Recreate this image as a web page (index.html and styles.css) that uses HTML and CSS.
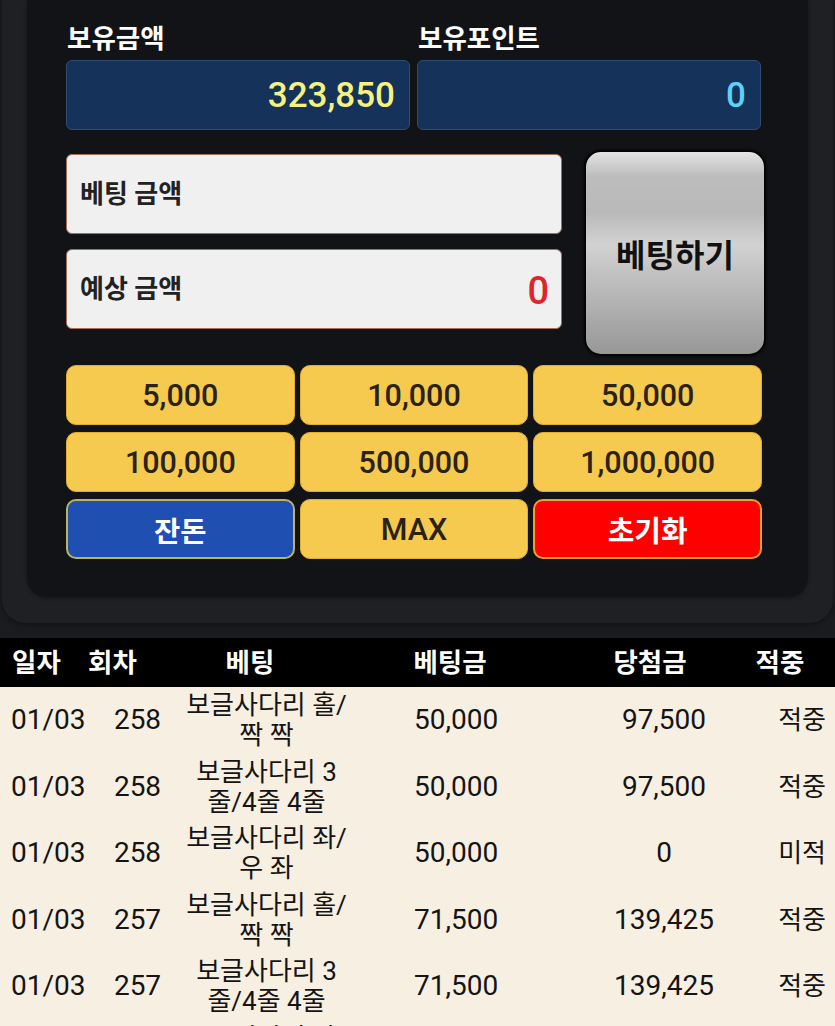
FILE: index.html
```html
<!DOCTYPE html>
<html lang="ko">
<head>
<meta charset="utf-8">
<title>베팅</title>
<link rel="stylesheet" href="styles.css">
</head>
<body>
<div class="top">
  <div class="outer">
    <div class="inner">
      <div class="balances">
        <div class="bal">
          <div class="bal-label">보유금액</div>
          <div class="bal-field"><span class="money">323,850</span></div>
        </div>
        <div class="bal">
          <div class="bal-label">보유포인트</div>
          <div class="bal-field"><span class="point">0</span></div>
        </div>
      </div>
      <div class="bet">
        <div class="bet-inputs">
          <div class="bet-input"><span class="bet-label">베팅 금액</span></div>
          <div class="bet-input"><span class="bet-label">예상 금액</span><span class="expect">0</span></div>
        </div>
        <button class="bet-btn">베팅하기</button>
      </div>
      <div class="chips">
        <button class="chip">5,000</button>
        <button class="chip">10,000</button>
        <button class="chip">50,000</button>
        <button class="chip">100,000</button>
        <button class="chip">500,000</button>
        <button class="chip">1,000,000</button>
        <button class="chip chip-blue">잔돈</button>
        <button class="chip">MAX</button>
        <button class="chip chip-red">초기화</button>
      </div>
    </div>
  </div>
</div>
<div class="table">
  <div class="thead">
    <div class="th th-date">일자</div>
    <div class="th th-round">회차</div>
    <div class="th">베팅</div>
    <div class="th">베팅금</div>
    <div class="th">당첨금</div>
    <div class="th">적중</div>
  </div>
  <div class="tr">
    <div class="td date">01/03</div><div class="td round">258</div>
    <div class="td pick">보글사다리 홀/<br>짝 짝</div>
    <div class="td amount">50,000</div><div class="td win">97,500</div><div class="td hit">적중</div>
  </div>
  <div class="tr">
    <div class="td date">01/03</div><div class="td round">258</div>
    <div class="td pick">보글사다리 3<br>줄/4줄 4줄</div>
    <div class="td amount">50,000</div><div class="td win">97,500</div><div class="td hit">적중</div>
  </div>
  <div class="tr">
    <div class="td date">01/03</div><div class="td round">258</div>
    <div class="td pick">보글사다리 좌/<br>우 좌</div>
    <div class="td amount">50,000</div><div class="td win">0</div><div class="td hit">미적</div>
  </div>
  <div class="tr">
    <div class="td date">01/03</div><div class="td round">257</div>
    <div class="td pick">보글사다리 홀/<br>짝 짝</div>
    <div class="td amount">71,500</div><div class="td win">139,425</div><div class="td hit">적중</div>
  </div>
  <div class="tr">
    <div class="td date">01/03</div><div class="td round">257</div>
    <div class="td pick">보글사다리 3<br>줄/4줄 4줄</div>
    <div class="td amount">71,500</div><div class="td win">139,425</div><div class="td hit">적중</div>
  </div>
  <div class="tr">
    <div class="td date">01/03</div><div class="td round">257</div>
    <div class="td pick">보글사다리 좌/<br>우 좌</div>
    <div class="td amount">71,500</div><div class="td win">0</div><div class="td hit">미적</div>
  </div>
</div>
</body>
</html>
```

FILE: styles.css
```css
* { box-sizing: border-box; }
html, body { margin: 0; padding: 0; }
body {
  background: #f7efe2;
  font-family: Roboto, "Noto Sans CJK KR", sans-serif;
  width: 835px;
  overflow: hidden;
}
.top {
  background: #1b1c20;
  padding: 0 2px 15px 2px;
}
.outer {
  background: #1f2024;
  border-radius: 0 0 24px 24px;
  padding: 0 25px 26px 25px;
  box-shadow: 0 2px 6px rgba(0,0,0,0.35);
}
.inner {
  background: #121316;
  border-radius: 0 0 20px 20px;
  padding: 22px 40px 38px 39px;
  box-shadow: 0 1px 4px rgba(0,0,0,0.4);
}
.balances {
  display: grid;
  grid-template-columns: 344px 344px;
  column-gap: 7px;
}
.bal-label {
  color: #ffffff;
  font-weight: 700;
  font-size: 26.5px;
  line-height: 34px;
  margin-bottom: 4px;
  padding-left: 1px;
}
.bal-field {
  height: 70px;
  background: #14325a;
  border: 1px solid #2e4d73;
  border-radius: 6px;
  display: flex;
  align-items: center;
  justify-content: flex-end;
  padding-right: 14px;
  font-size: 35px;
  font-weight: 500;
}
.money { color: #f7f27c; }
.point { color: #5cd3f5; }

.bet {
  margin-top: 20px;
  display: grid;
  grid-template-columns: 496px 182px;
  column-gap: 22px;
  align-items: start;
}
.bet-inputs {
  margin-top: 4px;
  display: flex;
  flex-direction: column;
  gap: 15px;
}
.bet-input {
  height: 80px;
  background: #f0f0f0;
  border: 1px solid #a86e58;
  border-radius: 6px;
  display: flex;
  align-items: center;
  justify-content: space-between;
  padding: 0 12px 0 13px;
}
.bet-label {
  font-size: 26px;
  font-weight: 700;
  color: #222222;
  margin-top: -6px;
}
.expect {
  font-size: 38px;
  font-weight: 500;
  color: #e0242a;
  margin-top: 4px;
}
.bet-btn {
  height: 206px;
  border: 2px solid #050505;
  border-radius: 17px;
  background: linear-gradient(180deg, #e4e4e4 0%, #bdbdbd 12%, #b9b9b9 30%, #d2d2d2 46%, #c0c0c0 62%, #a4a4a4 88%, #979797 100%);
  box-shadow: 0 0 3px rgba(0,0,0,0.8);
  font-family: Roboto, "Noto Sans CJK KR", sans-serif;
  font-size: 32px;
  font-weight: 700;
  color: #111111;
  padding: 0;
  cursor: pointer;
}

.chips {
  margin-top: 9px;
  width: 696px;
  display: grid;
  grid-template-columns: repeat(3, 1fr);
  column-gap: 5px;
  row-gap: 7px;
}
.chip {
  height: 60px;
  background: #f6c94f;
  border: 1px solid #e0ad2e;
  border-radius: 10px;
  font-family: Roboto, "Noto Sans CJK KR", sans-serif;
  font-size: 30.5px;
  font-weight: 500;
  color: #2a2212;
  padding: 0;
  cursor: pointer;
}
.chip-blue {
  background: #1f4fb1;
  border: 2px solid #b9b566;
  color: #ffffff;
  font-weight: 700;
  font-size: 28.5px;
}
.chip-red {
  background: #ff0000;
  border: 2px solid #f0a125;
  color: #ffffff;
  font-weight: 700;
  font-size: 29px;
}

.thead {
  height: 49px;
  background: #000000;
  display: grid;
  grid-template-columns: 80px 95px 150px 250px 150px 110px;
  align-items: center;
}
.th {
  color: #ffffff;
  font-size: 26.5px;
  font-weight: 700;
  text-align: center;
  line-height: 30px;
}
.th-date { text-align: left; padding-left: 12px; }
.th-round { text-align: left; padding-left: 8px; }

.tr {
  height: 66.5px;
  display: grid;
  grid-template-columns: 100px 75px 183px 197px 218px 62px;
  align-items: center;
  color: #141414;
}
.td {
  font-size: 28px;
  font-weight: 400;
  line-height: 32px;
}
.date { padding-left: 11px; }
.round { text-align: center; }
.pick {
  font-size: 26px;
  line-height: 30px;
  text-align: center;
  white-space: nowrap;
}
.amount { padding-left: 56px; }
.win { text-align: center; }
.hit {
  font-size: 26px;
  text-align: right;
  padding-right: 9px;
}
```
